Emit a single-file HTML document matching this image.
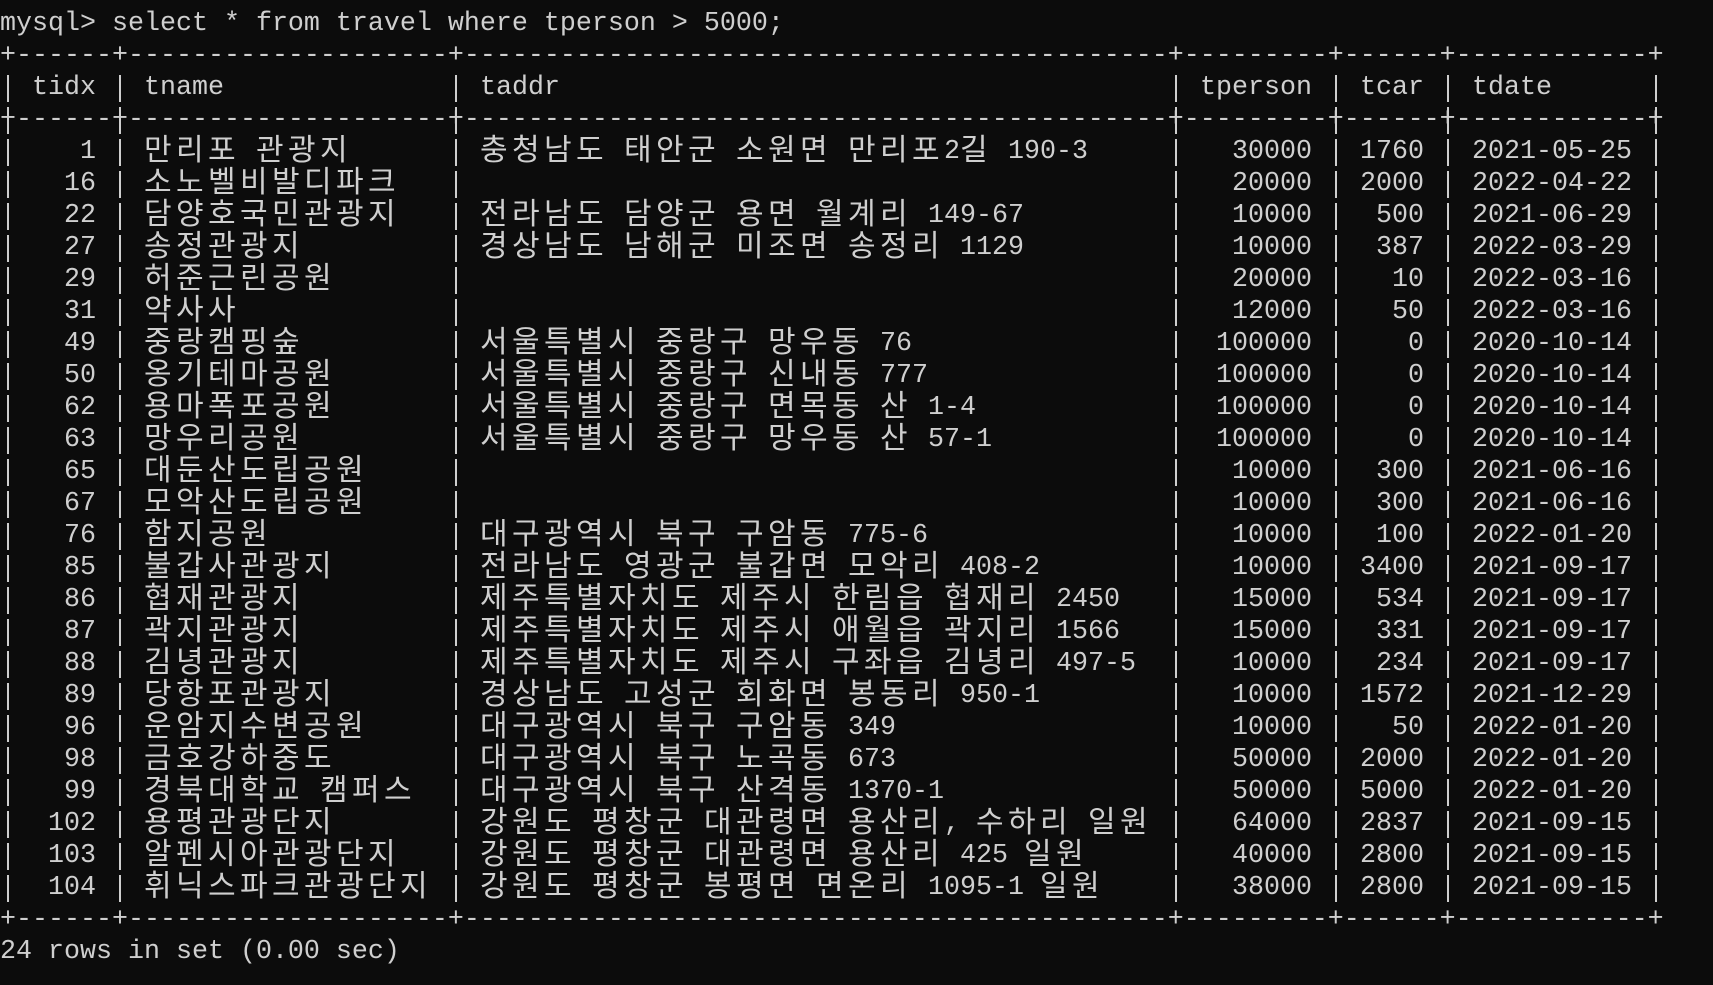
<!DOCTYPE html>
<html><head><meta charset="utf-8"><style>
html,body{margin:0;padding:0;background:#0c0c0c;}
body{width:1713px;height:985px;overflow:hidden;position:relative;color:#cfcfcf;font-family:"Liberation Mono","Noto Sans CJK KR",monospace;font-size:26.67px;}
#w{position:absolute;left:0;top:2px;width:1713px;height:983px;}
.l{position:absolute;left:0;height:32px;line-height:32px;white-space:pre;width:1713px;}
.l span{position:absolute;top:0;white-space:pre;}
b{font-weight:normal;font-family:"Noto Sans CJK KR","NanumGothic",sans-serif;font-size:30px;letter-spacing:4.4px;line-height:0;position:relative;top:2px;}
.a{left:16px;width:80px;text-align:right;}
.n{left:144px;}
.d{left:480px;}
.p{left:1152px;width:160px;text-align:right;}
.c{left:1344px;width:80px;text-align:right;}
.t{left:1472px;}
.v{position:absolute;width:2px;top:70px;height:832px;background:repeating-linear-gradient(to bottom,transparent 0,transparent 3px,#cfcfcf 3px,#cfcfcf 30px,transparent 30px,transparent 32px);}
</style></head><body><div id="w">
<div class="l" style="top:6px">mysql&gt; select * from travel where tperson &gt; 5000;</div>
<div class="l" style="top:38px">+------+--------------------+--------------------------------------------+---------+------+------------+</div>
<div class="l" style="top:70px"><span style="left:32px">tidx</span><span class="n">tname</span><span class="d">taddr</span><span style="left:1200px">tperson</span><span style="left:1360px">tcar</span><span class="t">tdate</span></div>
<div class="l" style="top:102px">+------+--------------------+--------------------------------------------+---------+------+------------+</div>

<div class="l" style="top:134px"><span class="a">1</span><span class="n"><b>만리포</b> <b>관광지</b></span><span class="d"><b>충청남도</b> <b>태안군</b> <b>소원면</b> <b>만리포</b>2<b>길</b> 190-3</span><span class="p">30000</span><span class="c">1760</span><span class="t">2021-05-25</span></div>
<div class="l" style="top:166px"><span class="a">16</span><span class="n"><b>소노벨비발디파크</b></span><span class="p">20000</span><span class="c">2000</span><span class="t">2022-04-22</span></div>
<div class="l" style="top:198px"><span class="a">22</span><span class="n"><b>담양호국민관광지</b></span><span class="d"><b>전라남도</b> <b>담양군</b> <b>용면</b> <b>월계리</b> 149-67</span><span class="p">10000</span><span class="c">500</span><span class="t">2021-06-29</span></div>
<div class="l" style="top:230px"><span class="a">27</span><span class="n"><b>송정관광지</b></span><span class="d"><b>경상남도</b> <b>남해군</b> <b>미조면</b> <b>송정리</b> 1129</span><span class="p">10000</span><span class="c">387</span><span class="t">2022-03-29</span></div>
<div class="l" style="top:262px"><span class="a">29</span><span class="n"><b>허준근린공원</b></span><span class="p">20000</span><span class="c">10</span><span class="t">2022-03-16</span></div>
<div class="l" style="top:294px"><span class="a">31</span><span class="n"><b>약사사</b></span><span class="p">12000</span><span class="c">50</span><span class="t">2022-03-16</span></div>
<div class="l" style="top:326px"><span class="a">49</span><span class="n"><b>중랑캠핑숲</b></span><span class="d"><b>서울특별시</b> <b>중랑구</b> <b>망우동</b> 76</span><span class="p">100000</span><span class="c">0</span><span class="t">2020-10-14</span></div>
<div class="l" style="top:358px"><span class="a">50</span><span class="n"><b>옹기테마공원</b></span><span class="d"><b>서울특별시</b> <b>중랑구</b> <b>신내동</b> 777</span><span class="p">100000</span><span class="c">0</span><span class="t">2020-10-14</span></div>
<div class="l" style="top:390px"><span class="a">62</span><span class="n"><b>용마폭포공원</b></span><span class="d"><b>서울특별시</b> <b>중랑구</b> <b>면목동</b> <b>산</b> 1-4</span><span class="p">100000</span><span class="c">0</span><span class="t">2020-10-14</span></div>
<div class="l" style="top:422px"><span class="a">63</span><span class="n"><b>망우리공원</b></span><span class="d"><b>서울특별시</b> <b>중랑구</b> <b>망우동</b> <b>산</b> 57-1</span><span class="p">100000</span><span class="c">0</span><span class="t">2020-10-14</span></div>
<div class="l" style="top:454px"><span class="a">65</span><span class="n"><b>대둔산도립공원</b></span><span class="p">10000</span><span class="c">300</span><span class="t">2021-06-16</span></div>
<div class="l" style="top:486px"><span class="a">67</span><span class="n"><b>모악산도립공원</b></span><span class="p">10000</span><span class="c">300</span><span class="t">2021-06-16</span></div>
<div class="l" style="top:518px"><span class="a">76</span><span class="n"><b>함지공원</b></span><span class="d"><b>대구광역시</b> <b>북구</b> <b>구암동</b> 775-6</span><span class="p">10000</span><span class="c">100</span><span class="t">2022-01-20</span></div>
<div class="l" style="top:550px"><span class="a">85</span><span class="n"><b>불갑사관광지</b></span><span class="d"><b>전라남도</b> <b>영광군</b> <b>불갑면</b> <b>모악리</b> 408-2</span><span class="p">10000</span><span class="c">3400</span><span class="t">2021-09-17</span></div>
<div class="l" style="top:582px"><span class="a">86</span><span class="n"><b>협재관광지</b></span><span class="d"><b>제주특별자치도</b> <b>제주시</b> <b>한림읍</b> <b>협재리</b> 2450</span><span class="p">15000</span><span class="c">534</span><span class="t">2021-09-17</span></div>
<div class="l" style="top:614px"><span class="a">87</span><span class="n"><b>곽지관광지</b></span><span class="d"><b>제주특별자치도</b> <b>제주시</b> <b>애월읍</b> <b>곽지리</b> 1566</span><span class="p">15000</span><span class="c">331</span><span class="t">2021-09-17</span></div>
<div class="l" style="top:646px"><span class="a">88</span><span class="n"><b>김녕관광지</b></span><span class="d"><b>제주특별자치도</b> <b>제주시</b> <b>구좌읍</b> <b>김녕리</b> 497-5</span><span class="p">10000</span><span class="c">234</span><span class="t">2021-09-17</span></div>
<div class="l" style="top:678px"><span class="a">89</span><span class="n"><b>당항포관광지</b></span><span class="d"><b>경상남도</b> <b>고성군</b> <b>회화면</b> <b>봉동리</b> 950-1</span><span class="p">10000</span><span class="c">1572</span><span class="t">2021-12-29</span></div>
<div class="l" style="top:710px"><span class="a">96</span><span class="n"><b>운암지수변공원</b></span><span class="d"><b>대구광역시</b> <b>북구</b> <b>구암동</b> 349</span><span class="p">10000</span><span class="c">50</span><span class="t">2022-01-20</span></div>
<div class="l" style="top:742px"><span class="a">98</span><span class="n"><b>금호강하중도</b></span><span class="d"><b>대구광역시</b> <b>북구</b> <b>노곡동</b> 673</span><span class="p">50000</span><span class="c">2000</span><span class="t">2022-01-20</span></div>
<div class="l" style="top:774px"><span class="a">99</span><span class="n"><b>경북대학교</b> <b>캠퍼스</b></span><span class="d"><b>대구광역시</b> <b>북구</b> <b>산격동</b> 1370-1</span><span class="p">50000</span><span class="c">5000</span><span class="t">2022-01-20</span></div>
<div class="l" style="top:806px"><span class="a">102</span><span class="n"><b>용평관광단지</b></span><span class="d"><b>강원도</b> <b>평창군</b> <b>대관령면</b> <b>용산리</b>, <b>수하리</b> <b>일원</b></span><span class="p">64000</span><span class="c">2837</span><span class="t">2021-09-15</span></div>
<div class="l" style="top:838px"><span class="a">103</span><span class="n"><b>알펜시아관광단지</b></span><span class="d"><b>강원도</b> <b>평창군</b> <b>대관령면</b> <b>용산리</b> 425 <b>일원</b></span><span class="p">40000</span><span class="c">2800</span><span class="t">2021-09-15</span></div>
<div class="l" style="top:870px"><span class="a">104</span><span class="n"><b>휘닉스파크관광단지</b></span><span class="d"><b>강원도</b> <b>평창군</b> <b>봉평면</b> <b>면온리</b> 1095-1 <b>일원</b></span><span class="p">38000</span><span class="c">2800</span><span class="t">2021-09-15</span></div>

<div class="l" style="top:902px">+------+--------------------+--------------------------------------------+---------+------+------------+</div>
<div class="l" style="top:934px">24 rows in set (0.00 sec)</div>

<div class="v" style="left:7px"></div>
<div class="v" style="left:119px"></div>
<div class="v" style="left:455px"></div>
<div class="v" style="left:1175px"></div>
<div class="v" style="left:1335px"></div>
<div class="v" style="left:1447px"></div>
<div class="v" style="left:1655px"></div>
</div></body></html>
